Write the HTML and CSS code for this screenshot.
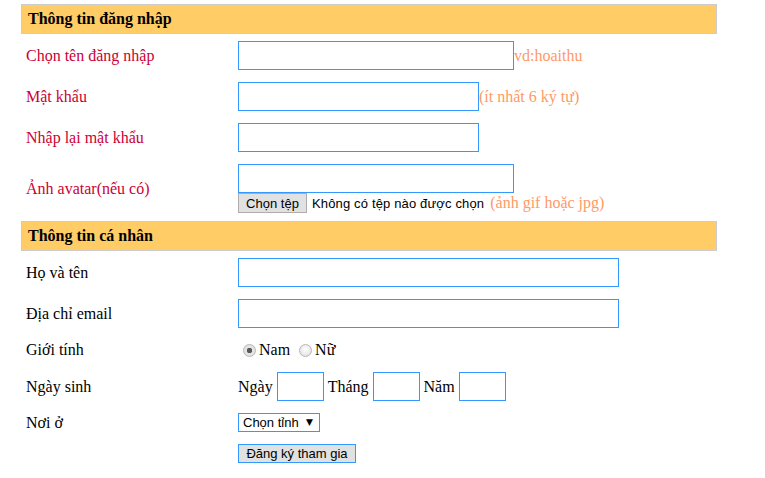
FILE: index.html
```html
<!DOCTYPE html>
<html lang="vi">
<head>
<meta charset="utf-8">
<title>Đăng ký</title>
<link rel="stylesheet" href="styles.css">
</head>
<body>
<form class="form">
  <div class="section-title">Thông tin đăng nhập</div>

  <div class="row">
    <label class="label red">Chọn tên đăng nhập</label>
    <div class="field"><input class="text w276" type="text"><span class="hint">vd:hoaithu</span></div>
  </div>
  <div class="row">
    <label class="label red">Mật khẩu</label>
    <div class="field"><input class="text w241" type="password"><span class="hint">(ít nhất 6 ký tự)</span></div>
  </div>
  <div class="row">
    <label class="label red">Nhập lại mật khẩu</label>
    <div class="field"><input class="text w241" type="password"></div>
  </div>
  <div class="row row-avatar">
    <label class="label red">Ảnh avatar(nếu có)</label>
    <div class="field stack">
      <input class="text w276" type="text">
      <div class="file-line">
        <span class="file-btn">Chọn tệp</span>
        <span class="file-text">Không có tệp nào được chọn</span>
        <span class="hint hint-file">(ảnh gif hoặc jpg)</span>
      </div>
    </div>
  </div>

  <div class="section-title">Thông tin cá nhân</div>

  <div class="row">
    <label class="label">Họ và tên</label>
    <div class="field"><input class="text w381" type="text"></div>
  </div>
  <div class="row">
    <label class="label">Địa chỉ email</label>
    <div class="field"><input class="text w381" type="text"></div>
  </div>
  <div class="row">
    <label class="label">Giới tính</label>
    <div class="field radios">
      <label class="radio-item"><input class="radio" type="radio" name="gt" checked>Nam</label>
      <label class="radio-item"><input class="radio" type="radio" name="gt">Nữ</label>
    </div>
  </div>
  <div class="row">
    <label class="label">Ngày sinh</label>
    <div class="field dates">
      <span>Ngày</span><input class="text w47" type="text">
      <span>Tháng</span><input class="text w47" type="text">
      <span>Năm</span><input class="text w47" type="text">
    </div>
  </div>
  <div class="row">
    <label class="label">Nơi ở</label>
    <div class="field">
      <span class="select-box"><select class="select"><option>Chọn tỉnh</option></select><span class="arrow">▼</span></span>
    </div>
  </div>
  <div class="row">
    <span class="label"></span>
    <div class="field"><button class="submit" type="button">Đăng ký tham gia</button></div>
  </div>
</form>
</body>
</html>
```

FILE: styles.css
```css
html, body {
  margin: 0;
  padding: 0;
  background: #ffffff;
}
body {
  padding: 4px 0 0 21px;
  font-family: "Liberation Serif", "Times New Roman", serif;
  font-size: 16px;
  color: #000000;
}
.form {
  width: 696px;
  display: flex;
  flex-direction: column;
}
.section-title {
  height: 28px;
  line-height: 28px;
  border: 1px solid #cccccc;
  background: #ffcc66;
  font-weight: bold;
  padding-left: 6px;
}
.row {
  display: grid;
  grid-template-columns: 217px 1fr;
  align-items: center;
  padding: 7px 0 5px;
}
.row-avatar {
  padding-bottom: 8px;
}
.label {
  padding-left: 5px;
}
.red {
  color: #cc0033;
}
.field {
  display: flex;
  align-items: center;
}
.stack {
  flex-direction: column;
  align-items: flex-start;
}
.text {
  box-sizing: border-box;
  height: 29px;
  border: 1px solid #3399ff;
  margin: 0;
  padding: 0 2px;
  background: #fff;
  font-family: "Liberation Sans", Arial, sans-serif;
  font-size: 13px;
  outline: none;
}
.w276 { width: 276px; }
.w241 { width: 241px; }
.w381 { width: 381px; }
.w47 { width: 47px; }
.hint {
  color: #ff9966;
}
.file-line {
  display: flex;
  align-items: center;
  height: 20px;
}
.file-btn {
  box-sizing: border-box;
  height: 20px;
  width: 69px;
  display: inline-flex;
  align-items: center;
  justify-content: center;
  border: 1px solid #adadad;
  background: #e1e1e1;
  font-family: "Liberation Sans", Arial, sans-serif;
  font-size: 13px;
}
.file-text {
  margin-left: 5px;
  font-family: "Liberation Sans", Arial, sans-serif;
  font-size: 13px;
  letter-spacing: 0.15px;
}
.hint-file {
  margin-left: 6px;
}
.radios {
  height: 20px;
  padding-left: 5px;
}
.radio-item {
  display: inline-flex;
  align-items: center;
  margin-right: 9px;
}
.radio {
  appearance: none;
  -webkit-appearance: none;
  box-sizing: border-box;
  width: 13px;
  height: 13px;
  margin: 0 3px 0 0;
  border-radius: 50%;
  border: 1px solid #b6b6b6;
  background: radial-gradient(circle at 50% 40%, #ffffff 0%, #e6e6e6 70%, #d8d8d8 100%);
}
.radio:checked {
  background: radial-gradient(circle, #5a5a5a 0, #5a5a5a 2.5px, #e4e4e4 3px, #e4e4e4 100%);
}
.dates span {
  margin-right: 4px;
}
.dates input {
  margin-right: 4px;
}
.select-box {
  box-sizing: border-box;
  display: inline-flex;
  align-items: center;
  width: 82px;
  height: 19px;
  border: 1px solid #3399ff;
  background: #fff;
}
.select {
  appearance: none;
  -webkit-appearance: none;
  border: none;
  outline: none;
  background: transparent;
  padding: 0 0 0 4px;
  margin: 0;
  width: 67px;
  font-family: "Liberation Sans", Arial, sans-serif;
  font-size: 13px;
  color: #000;
}
.arrow {
  font-size: 9px;
  line-height: 1;
  font-family: "DejaVu Sans", sans-serif;
}
.submit {
  box-sizing: border-box;
  width: 118px;
  height: 19px;
  margin: 0;
  padding: 0;
  border: 1px solid #3399ff;
  background: #e1e1e1;
  font-family: "Liberation Sans", Arial, sans-serif;
  font-size: 13px;
  color: #000;
}
```
